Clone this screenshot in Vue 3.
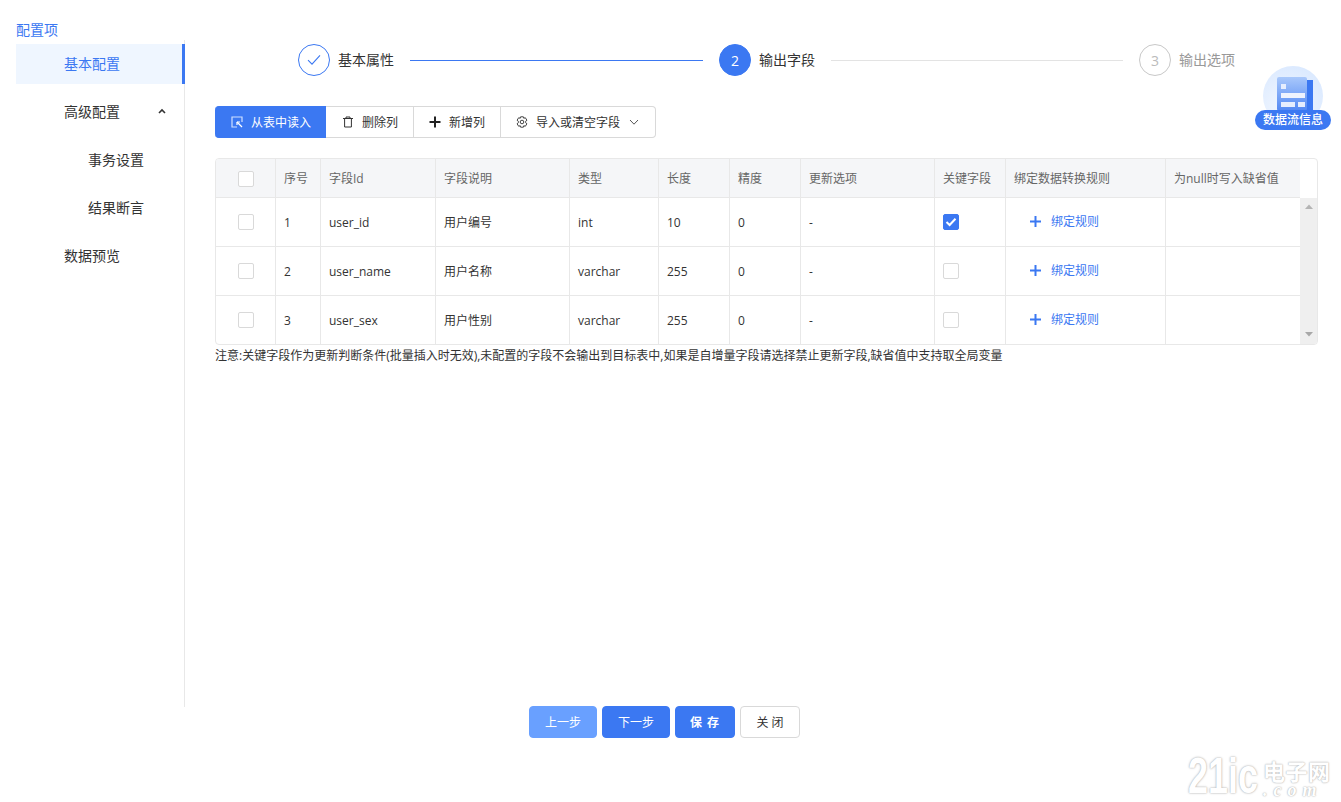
<script setup>
const columns = ['序号', '字段Id', '字段说明', '类型', '长度', '精度', '更新选项', '关键字段', '绑定数据转换规则', '为null时写入缺省值']
const rows = [
  { no: 1, id: 'user_id', desc: '用户编号', type: 'int', len: 10, key: true },
  { no: 2, id: 'user_name', desc: '用户名称', type: 'varchar', len: 255, key: false },
  { no: 3, id: 'user_sex', desc: '用户性别', type: 'varchar', len: 255, key: false }
]
</script>

<template>
  <div class="page">
    <div class="body">
      <aside class="side">
        <div class="side-title">配置项</div>
        <nav class="menu">
          <div class="item active">基本配置</div>
          <div class="item">
            高级配置
            <svg class="caret" width="8" height="6" viewBox="0 0 8 6"><path d="M1 5 L4 2 L7 5" fill="none" stroke="#333" stroke-width="1.6" /></svg>
          </div>
          <div class="item sub">事务设置</div>
          <div class="item sub">结果断言</div>
          <div class="item">数据预览</div>
        </nav>
      </aside>

      <main class="main">
        <div class="steps">
          <div class="step first">
            <span class="dot done">
              <svg width="14" height="12" viewBox="0 0 14 12"><path d="M1 6.2 L5 10.2 L13 1.4" fill="none" stroke="#3b78f2" stroke-width="1.1" /></svg>
            </span>
            <span class="label">基本属性</span>
            <span class="line blue"></span>
          </div>
          <div class="step second">
            <span class="dot now">2</span>
            <span class="label">输出字段</span>
            <span class="line"></span>
          </div>
          <div class="step last">
            <span class="dot todo">3</span>
            <span class="label muted">输出选项</span>
          </div>
        </div>

        <div class="toolbar">
          <button class="tool primary">
            <svg width="12" height="12" viewBox="0 0 12 12"><path d="M11 6 V1 H1 V11 H6" fill="none" stroke="#cfe0ff" stroke-width="1.2" /><path d="M6 6 L11 11" stroke="#fff" stroke-width="1.2" /><path d="M6 6 H9 M6 6 V9" stroke="#fff" stroke-width="1.2" /></svg>
            <span>从表中读入</span>
          </button>
          <button class="tool">
            <svg width="12" height="12" viewBox="0 0 12 12"><path d="M1 2.5 H11 M4 2.5 V1 H8 V2.5 M2.6 2.5 V11 H9.4 V2.5" fill="none" stroke="#333" stroke-width="1" /></svg>
            <span>删除列</span>
          </button>
          <button class="tool">
            <svg width="12" height="12" viewBox="0 0 12 12"><path d="M6 .5 V11.5 M.5 6 H11.5" stroke="#222" stroke-width="2" /></svg>
            <span>新增列</span>
          </button>
          <button class="tool">
            <svg width="12" height="12" viewBox="0 0 12 12"><path d="M4.6 .8 H7.4 L7.8 2.3 L9.3 1.7 L10.9 4.2 L9.7 5.2 V6.8 L10.9 7.8 L9.3 10.3 L7.8 9.7 L7.4 11.2 H4.6 L4.2 9.7 L2.7 10.3 L1.1 7.8 L2.3 6.8 V5.2 L1.1 4.2 L2.7 1.7 L4.2 2.3 Z" fill="none" stroke="#444" stroke-width="1" /><circle cx="6" cy="6" r="1.8" fill="none" stroke="#444" stroke-width="1" /></svg>
            <span>导入或清空字段</span>
            <svg width="12" height="12" viewBox="0 0 12 12"><path d="M2 4 L6 8.2 L10 4" fill="none" stroke="#555" stroke-width="1" /></svg>
          </button>
        </div>

        <div class="table">
          <div class="grid-wrap">
            <div class="row head">
              <div class="cell center"><span class="check"></span></div>
              <div v-for="c in columns" :key="c" class="cell">{{ c }}</div>
            </div>
            <div v-for="r in rows" :key="r.no" class="row">
              <div class="cell center"><span class="check"></span></div>
              <div class="cell">{{ r.no }}</div>
              <div class="cell">{{ r.id }}</div>
              <div class="cell">{{ r.desc }}</div>
              <div class="cell">{{ r.type }}</div>
              <div class="cell">{{ r.len }}</div>
              <div class="cell">0</div>
              <div class="cell">-</div>
              <div class="cell">
                <span class="check" :class="{ on: r.key }">
                  <svg v-if="r.key" width="12" height="10" viewBox="0 0 12 10"><path d="M1.5 5 L4.6 8 L10.5 1.8" fill="none" stroke="#fff" stroke-width="2" /></svg>
                </span>
              </div>
              <div class="cell bind">
                <svg width="11" height="11" viewBox="0 0 11 11"><path d="M5.5 0 V11 M0 5.5 H11" stroke="#3b78f2" stroke-width="2" /></svg>
                <span>绑定规则</span>
              </div>
              <div class="cell"></div>
            </div>
          </div>
          <div class="scroll">
            <div class="track">
              <svg width="10" height="6" viewBox="0 0 10 6"><path d="M5 .5 L9 5 H1 Z" fill="#b4b4b4" /></svg>
              <svg width="10" height="6" viewBox="0 0 10 6"><path d="M5 5.5 L9 1 H1 Z" fill="#a8a8a8" /></svg>
            </div>
          </div>
        </div>

        <p class="note">注意:关键字段作为更新判断条件(批量插入时无效),未配置的字段不会输出到目标表中,如果是自增量字段请选择禁止更新字段,缺省值中支持取全局变量</p>
      </main>
    </div>

    <footer class="footer">
      <button class="btn prev">上一步</button>
      <button class="btn next">下一步</button>
      <button class="btn save">保 存</button>
      <button class="btn close">关 闭</button>
    </footer>

    <div class="badge">
      <div class="badge-circle">
        <svg width="40" height="34" viewBox="0 0 40 34">
          <defs>
            <linearGradient id="docg" x1="0" y1="0" x2="0" y2="1">
              <stop offset="0" stop-color="#a9c8fb" />
              <stop offset="1" stop-color="#5288f3" />
            </linearGradient>
          </defs>
          <rect x="32" y="3" width="8" height="31" fill="#3b78f2" />
          <rect x="4" y="0" width="30" height="34" rx="2" fill="url(#docg)" />
          <rect x="8" y="7" width="5" height="5" fill="#e6eefe" />
          <rect x="8" y="16" width="24" height="5" fill="#eef3fe" />
          <rect x="8" y="25" width="14" height="5" fill="#e6eefe" />
          <rect x="25" y="25" width="7" height="5" fill="#e6eefe" />
        </svg>
      </div>
      <div class="badge-pill">数据流信息</div>
    </div>

    <div class="mark">
      <span class="mark-big">21ic</span>
      <span class="mark-cn">电子网</span>
      <span class="mark-com">.com</span>
    </div>
  </div>
</template>

<style scoped>
.page {
  position: relative;
  width: 1341px;
  height: 802px;
  overflow: hidden;
  background: #fff;
  color: #333;
  font-family: "Open Sans", "Noto Sans CJK SC", sans-serif;
  font-size: 12px;
}
.body {
  display: flex;
  height: 707px;
  padding-top: 22px;
  box-sizing: border-box;
}
.side {
  width: 185px;
  flex: none;
  padding-left: 16px;
  box-sizing: border-box;
  display: flex;
  flex-direction: column;
}
.side-title {
  height: 18px;
  line-height: 16px;
  font-size: 14px;
  color: #3b78f2;
}
.menu {
  flex: 1;
  padding-top: 4px;
  border-right: 1px solid #e8e8e8;
}
.item {
  position: relative;
  height: 40px;
  line-height: 40px;
  margin-bottom: 8px;
  padding-left: 48px;
  font-size: 14px;
  color: #333;
}
.item.sub { padding-left: 72px; }
.item.active {
  background: #eff6ff;
  color: #3b78f2;
  margin-right: -1px;
  border-right: 3px solid #3b78f2;
}
.caret {
  position: absolute;
  left: 142px;
  top: 16px;
}
.main {
  flex: 1;
  min-width: 0;
  padding: 22px 23px 0 30px;
}
.steps {
  display: flex;
  align-items: center;
  width: 937px;
  margin-left: 83px;
  height: 32px;
}
.step {
  display: flex;
  align-items: center;
}
.step.first { flex: 421 1 0; }
.step.second { flex: 420 1 0; }
.step.last { flex: none; }
.dot {
  width: 32px;
  height: 32px;
  box-sizing: border-box;
  border-radius: 50%;
  border: 1px solid #c8c8c8;
  display: flex;
  align-items: center;
  justify-content: center;
  font-size: 14px;
  flex: none;
}
.dot.done { border-color: #3b78f2; }
.dot.now { background: #3b78f2; border-color: #3b78f2; color: #fff; }
.dot.todo { color: #bbb; }
.label {
  margin-left: 8px;
  padding-bottom: 2px;
  font-size: 14px;
  color: #333;
  white-space: nowrap;
}
.label.muted { color: #999; }
.line {
  flex: 1;
  height: 1px;
  margin: 0 16px;
  background: #e3e3e3;
}
.line.blue { background: #3b78f2; }
.toolbar {
  display: flex;
  margin-top: 30px;
  height: 32px;
}
.tool {
  display: flex;
  align-items: center;
  gap: 8px;
  height: 32px;
  padding: 0 15px;
  margin: 0;
  box-sizing: border-box;
  background: #fff;
  border: 1px solid #d9d9d9;
  border-left: 0;
  font: inherit;
  color: #333;
  white-space: nowrap;
}
.tool:nth-child(2) { padding-left: 16px; }
.tool:last-child { border-radius: 0 4px 4px 0; }
.tool.primary {
  background: #3b78f2;
  border-color: #3b78f2;
  color: #fff;
  padding: 0 14px 0 16px;
  border-radius: 4px 0 0 4px;
}
.table {
  display: flex;
  width: 1103px;
  height: 187px;
  margin-top: 20px;
  box-sizing: border-box;
  border: 1px solid #e8e8e8;
  border-radius: 4px;
  overflow: hidden;
}
.grid-wrap { width: 1084px; flex: none; }
.row {
  display: grid;
  grid-template-columns: 60px 45px 115px 134px 89px 71px 71px 134px 71px 160px 134px;
  height: 49px;
  border-bottom: 1px solid #e8e8e8;
  box-sizing: border-box;
}
.row:last-child { border-bottom: 0; height: 48px; }
.row.head {
  height: 39px;
  background: #f5f6f8;
  color: #666;
}
.cell {
  display: flex;
  align-items: center;
  padding-left: 8px;
  border-right: 1px solid #e8e8e8;
  white-space: nowrap;
  min-width: 0;
}
.cell:last-child { border-right: 0; }
.cell.center { justify-content: center; padding: 0; }
.row.head .cell.center { padding-top: 2px; }
.check {
  display: flex;
  align-items: center;
  justify-content: center;
  width: 16px;
  height: 16px;
  box-sizing: border-box;
  background: #fff;
  border: 1px solid #d9d9d9;
  border-radius: 2px;
}
.check.on { background: #3b78f2; border-color: #3b78f2; }
.bind {
  padding-left: 24px;
  gap: 10px;
  color: #3b78f2;
  padding-bottom: 2px;
}
.scroll {
  width: 17px;
  flex: none;
  padding-top: 39px;
  box-sizing: border-box;
}
.track {
  height: 100%;
  background: #efefef;
  display: flex;
  flex-direction: column;
  justify-content: space-between;
  align-items: center;
  padding: 6px 0 7px;
  box-sizing: border-box;
}
.note {
  margin: 2px 0 0;
  line-height: 17px;
  color: #333;
  white-space: nowrap;
}
.footer {
  display: flex;
  justify-content: center;
  gap: 5px;
  width: 1329px;
  margin-top: -1px;
}
.btn {
  height: 32px;
  width: 60px;
  padding: 0;
  box-sizing: border-box;
  border: 1px solid #3b78f2;
  border-radius: 4px;
  background: #3b78f2;
  color: #fff;
  font: inherit;
}
.btn.prev { width: 68px; background: #69a0ff; border-color: #69a0ff; }
.btn.next { width: 68px; }
.btn.save { font-weight: 600; letter-spacing: 1px; }
.btn.close { background: #fff; border-color: #d9d9d9; color: #333; }
.badge {
  position: absolute;
  left: 1255px;
  top: 66px;
  width: 76px;
  height: 64px;
}
.badge-circle {
  position: absolute;
  left: 8px;
  top: 0;
  width: 60px;
  height: 60px;
  border-radius: 50%;
  background: radial-gradient(circle at 40% 70%, #f2f7ff 0%, #d5e6ff 100%);
  display: flex;
  justify-content: center;
  padding-top: 11px;
  box-sizing: border-box;
}
.badge-pill {
  position: absolute;
  left: 0;
  top: 44px;
  width: 76px;
  height: 20px;
  line-height: 20px;
  text-align: center;
  border-radius: 10px;
  background: #3b78f2;
  color: #fff;
  font-weight: 500;
  white-space: nowrap;
}
.mark {
  position: absolute;
  left: 1188px;
  top: 752px;
  width: 150px;
  height: 48px;
  color: #fff;
  text-shadow: 0 0 2px #b0b0b0, 0 0 1px #c0c0c0;
  white-space: nowrap;
}
.mark-big {
  position: absolute;
  left: 0;
  top: 0;
  font-family: "Liberation Sans", sans-serif;
  font-weight: 700;
  font-size: 36px;
  line-height: 48px;
  transform: scaleY(1.4);
}
.mark-cn {
  position: absolute;
  left: 75px;
  top: 7px;
  font-family: "Noto Sans CJK SC", sans-serif;
  font-weight: 700;
  font-size: 22px;
  line-height: 22px;
  letter-spacing: .5px;
}
.mark-com {
  position: absolute;
  left: 75px;
  top: 31px;
  font-family: "Liberation Serif", serif;
  font-style: italic;
  font-weight: 700;
  font-size: 18px;
  line-height: 14px;
  letter-spacing: 6px;
}
</style>

<style>
html, body { background: #fff; }
</style>
